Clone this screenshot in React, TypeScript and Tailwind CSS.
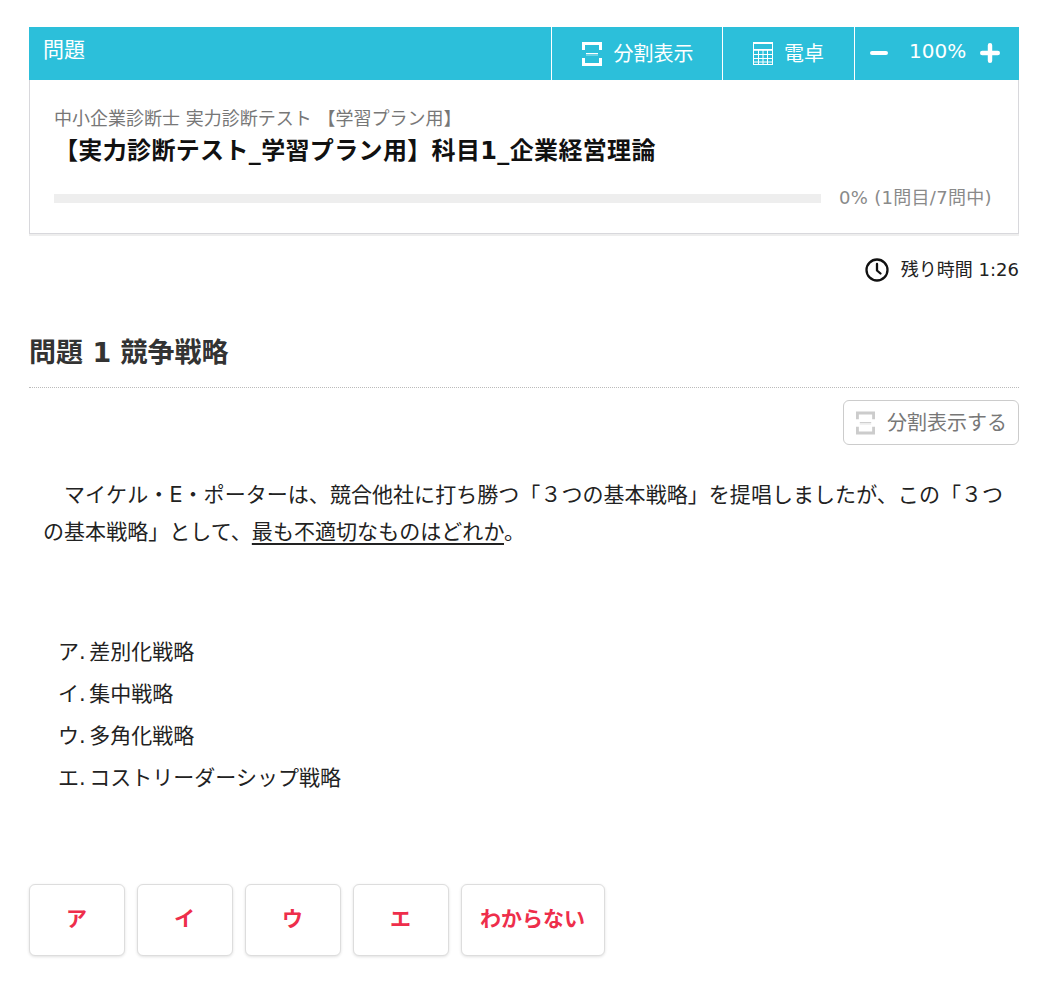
const font = { fontFamily: '"DejaVu Sans", "Noto Sans CJK JP", sans-serif' }

function SplitIcon({ className }: { className: string }) {
  return (
    <svg viewBox="0 0 20 24" className={className} fill="none" stroke="currentColor">
      <path d="M1.5 8V1.5h17V8M1.5 16v6.500h17V16" strokeWidth="3" />
      <path d="M4 11.500h12" strokeWidth="1" />
      <path d="M4 13h12" strokeWidth="1" opacity="0.6" />
    </svg>
  )
}

function CalcIcon() {
  return (
    <svg viewBox="0 0 20 23" className="h-[23px] w-[20px]" fill="none" stroke="currentColor" strokeWidth="1">
      <rect x="0.5" y="0.500" width="19" height="22" />
      <path d="M0.500 1.500h19M0.500 7.500h19M0.500 8.300h19" />
      <path d="M0.500 12.500h19M0.500 16.500h19M0.500 20h19M5.500 8v14.500M10 8v14.500M14.500 8v14.500" />
    </svg>
  )
}

export default function App() {
  return (
    <div style={font} className="min-h-[999px] bg-white pt-[27px] pr-[20px] pb-[43px] pl-[29px] text-[#222]">
      <div className="flex h-[53px] items-stretch bg-[#2cbfda] text-white">
        <div className="flex-1 pt-[9px] pl-[14px] text-[21px] leading-[28px]">問題</div>
        <div className="flex w-[171px] items-center justify-center gap-[12px] border-l border-white pl-[1px] text-[20px]">
          <SplitIcon className="h-[24px] w-[20px]" />
          <span>分割表示</span>
        </div>
        <div className="flex w-[132px] items-center justify-center gap-[11px] border-l border-white text-[20px]">
          <CalcIcon />
          <span>電卓</span>
        </div>
        <div className="flex w-[165px] items-center border-l border-white pl-[15px]">
          <svg viewBox="0 0 18 18" className="mb-[1px] h-[18px] w-[18px]" fill="none" stroke="currentColor" strokeWidth="4" strokeLinecap="round">
            <path d="M2 9h14" />
          </svg>
          <span className="mb-[6px] ml-[21px] w-[56px] text-center text-[20px] leading-none whitespace-nowrap">100%</span>
          <svg viewBox="0 0 18 18" className="mb-[1px] ml-[15px] h-[20px] w-[20px]" fill="none" stroke="currentColor" strokeWidth="4" strokeLinecap="round">
            <path d="M2 9h14M9 2v14" />
          </svg>
        </div>
      </div>

      <div className="h-[154px] border border-t-0 border-[#d8d8dc] px-[24px] pt-[27px] shadow-[0_2px_0_#eeeeee]">
        <div className="text-[18px] leading-[24px] text-[#777]">中小企業診断士 実力診断テスト 【学習プラン用】</div>
        <div className="mt-[5px] text-[24px] leading-[30px] font-bold tracking-[0.35px] text-[#111]">【実力診断テスト_学習プラン用】科目1_企業経営理論</div>
        <div className="mt-[20px] flex items-center">
          <div className="h-[9px] w-[767px] bg-[#eeeeee]" />
          <div className="ml-[18px] text-[18px] leading-[24px] tracking-[0.3px] whitespace-nowrap text-[#8a8a8a]">0% (1問目/7問中)</div>
        </div>
      </div>

      <div className="mt-[24px] flex items-center justify-end gap-[12px]">
        <svg viewBox="0 0 24 24" className="h-[24px] w-[24px]" fill="none" stroke="#111" strokeWidth="2.300" strokeLinecap="round" strokeLinejoin="round">
          <circle cx="12" cy="12" r="10.500" />
          <path d="M12 6v6.500l3.500 3" />
        </svg>
        <span className="text-[18px] leading-[24px] text-[#222]">残り時間 1:26</span>
      </div>

      <h2 className="mt-[53px] text-[27px] leading-[36px] font-bold text-[#333]">問題 1 競争戦略</h2>
      <div className="mt-[16px] border-b border-dotted border-[#bbbbbb]" />

      <div className="mt-[12px] flex justify-end">
        <div className="flex h-[45px] w-[176px] items-center justify-center gap-[12px] rounded-[6px] border border-[#cccccc] pl-[1px] text-[20px] text-[#777]">
          <SplitIcon className="h-[24px] w-[19px] text-[#cccccc]" />
          <span>分割表示する</span>
        </div>
      </div>

      <div className="mt-[32px] px-[14px] text-[21px] leading-[37px] tracking-[0.05px] text-[#222]">
        <p>
          <span className="inline-block w-[21px]" />マイケル・E・ポーターは、競合他社に打ち勝つ「３つの基本戦略」を提唱しましたが、この「３つの基本戦略」として、<span className="underline underline-offset-[4px]">最も不適切なものはどれか</span>。
        </p>
      </div>

      <ul className="mt-[80px] pl-[29px] text-[21px] leading-[42px] [word-spacing:-3px] text-[#222]">
        <li>ア. 差別化戦略</li>
        <li>イ. 集中戦略</li>
        <li>ウ. 多角化戦略</li>
        <li>エ. コストリーダーシップ戦略</li>
      </ul>

      <div className="mt-[85px] flex gap-[12px]">
        {['ア', 'イ', 'ウ', 'エ'].map((label) => (
          <button key={label} className="flex h-[72px] w-[96px] items-center justify-center rounded-[6px] border border-[#dddddd] bg-white pr-[1px] pb-[1px] text-[21px] font-bold text-[#ee2e4b] shadow-[0_1px_3px_rgba(0,0,0,0.12)]">
            {label}
          </button>
        ))}
        <button className="flex h-[72px] w-[144px] items-center justify-center rounded-[6px] border border-[#dddddd] bg-white pr-[1px] pb-[1px] text-[21px] font-bold text-[#ee2e4b] shadow-[0_1px_3px_rgba(0,0,0,0.12)]">
          わからない
        </button>
      </div>
    </div>
  )
}
